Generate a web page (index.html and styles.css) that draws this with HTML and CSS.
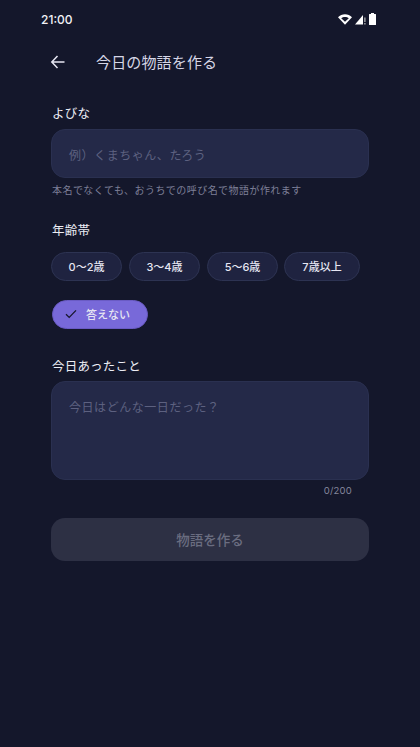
FILE: index.html
```html
<!DOCTYPE html>
<html lang="ja">
<head>
<meta charset="utf-8">
<title>今日の物語を作る</title>
<link rel="stylesheet" href="styles.css">
</head>
<body>
<div class="status">
  <span class="time">21:00</span>
  <span class="status-icons">
    <svg width="14" height="11" viewBox="0 0 14 11"><path d="M0 3.2C1.9 1.3 4.3.3 7 .3s5.100 1 7 2.900L7 10.700z" fill="#fff"/><path d="M3.200 4.300C4.200 3.500 5.500 3 7 3s2.800.500 3.800 1.300L7 7.800z" fill="#14172b"/></svg>
    <svg width="11" height="11" viewBox="0 0 11 11"><path d="M8 1 0 10.500h8z" fill="#fff"/><path d="M9.300 3.500h1.200v4.500H9.300zM9.300 9h1.200v1.500H9.300z" fill="#bbb"/></svg>
    <svg width="7" height="12" viewBox="0 0 7 12"><path d="M2 0h3v1h1.500a.5.500 0 0 1 .5.500V11.500a.5.500 0 0 1-.5.500H.5a.5.500 0 0 1-.5-.500V1.500A.5.500 0 0 1 .5 1H2z" fill="#fff"/></svg>
  </span>
</div>
<header class="topbar">
  <svg class="back" width="16" height="16" viewBox="0 0 16 16"><path d="M14.500 8H2M7.500 2 1.800 8l5.700 6" fill="none" stroke="#e6e6f2" stroke-width="1.500"/></svg>
  <h1 class="title">今日の物語を作る</h1>
</header>
<main class="form">
  <div class="label first">よびな</div>
  <div class="field name-field">例）くまちゃん、たろう</div>
  <div class="hint">本名でなくても、おうちでの呼び名で物語が作れます</div>
  <div class="label age-label">年齢帯</div>
  <div class="chips">
    <span class="chip">0〜2歳</span>
    <span class="chip">3〜4歳</span>
    <span class="chip">5〜6歳</span>
    <span class="chip wide">7歳以上</span>
  </div>
  <div class="chip selected">
    <svg width="12" height="10" viewBox="0 0 12 10"><path d="M1 5.200 4.200 8.400 11 1.400" fill="none" stroke="#17172e" stroke-width="1.300"/></svg>
    <span>答えない</span>
  </div>
  <div class="label today-label">今日あったこと</div>
  <div class="field area">今日はどんな一日だった？</div>
  <div class="count">0/200</div>
  <button class="submit" type="button">物語を作る</button>
</main>
</body>
</html>
```
FILE: styles.css
```css
* { box-sizing: border-box; }
html, body { margin: 0; height: 100%; }
body {
  width: 420px;
  height: 747px;
  overflow: hidden;
  background: #14172b;
  color: #e6e6f2;
  font-family: Inter, "Noto Sans CJK JP", sans-serif;
}
.status {
  height: 38px;
  padding: 0 44px 0 41px;
  display: flex;
  align-items: center;
  justify-content: space-between;
}
.time { font-size: 12px; font-weight: 500; color: #f1f1f6; }
.status-icons { display: flex; align-items: center; gap: 3px; }
.topbar {
  height: 47px;
  padding-left: 50px;
  display: flex;
  align-items: center;
}
.back { flex: none; margin-top: 1px; }
.title {
  margin: 0 0 0 30px;
  font-size: 15px;
  font-weight: 400;
  color: #d6d6e6;
  letter-spacing: .01em;
}
.form {
  padding: 0 51px;
  display: flex;
  flex-direction: column;
  align-items: flex-start;
}
.label {
  font-size: 12.500px;
  line-height: 18px;
  letter-spacing: .2px;
  color: #ecedf5;
  padding-left: 1px;
}
.first { margin-top: 20px; }
.field {
  width: 318px;
  border: 1px solid #2a3050;
  border-radius: 14px;
  background: #242948;
  color: #5d6180;
  font-size: 12px;
  letter-spacing: .55px;
  padding-left: 17px;
}
.name-field {
  height: 49px;
  margin-top: 6px;
  line-height: 52px;
}
.hint {
  margin-top: 5px;
  padding-left: 1px;
  font-size: 10px;
  line-height: 15px;
  letter-spacing: .45px;
  color: #7d7f97;
}
.age-label { margin-top: 24px; }
.chips {
  margin-top: 12px;
  display: flex;
  gap: 7px;
}
.chip {
  width: 71px;
  height: 29px;
  padding-bottom: 1px;
  border: 1px solid #2d3352;
  border-radius: 15px;
  background: #1f2340;
  font-size: 11px;
  font-weight: 500;
  color: #e6e6f2;
  display: flex;
  align-items: center;
  justify-content: center;
}
.wide { width: 76px; margin-left: -1px; }
.selected {
  width: 96px;
  height: 29px;
  margin-top: 19px;
  margin-left: 1px;
  padding-left: 12px;
  justify-content: flex-start;
  gap: 9px;
  background: #7869d9;
  border-color: #6a5bc4;
}
.today-label { margin-top: 29px; }
.area {
  height: 99px;
  margin-top: 5px;
  padding-top: 17px;
  line-height: 18px;
}
.count {
  width: 301px;
  margin-top: 4px;
  text-align: right;
  font-size: 9.500px;
  line-height: 14px;
  letter-spacing: .2px;
  color: #84869c;
}
.submit {
  width: 318px;
  height: 43px;
  margin-top: 20px;
  padding-bottom: 2px;
  border: 0;
  border-radius: 14px;
  background: #2d3044;
  color: #6a6d80;
  font-family: inherit;
  font-size: 13.500px;
  font-weight: 500;
}
```
